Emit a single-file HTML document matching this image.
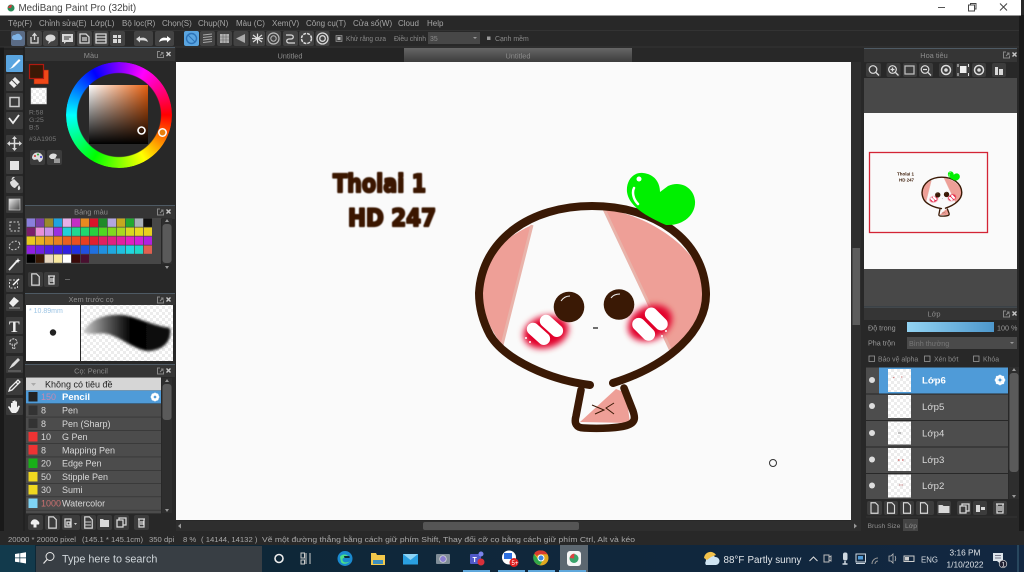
<!DOCTYPE html>
<html><head><meta charset="utf-8"><title>MediBang Paint Pro</title>
<style>
html,body{margin:0;padding:0;width:1024px;height:572px;overflow:hidden;background:#282828}
#wheel{position:absolute;left:66px;top:61.5px;width:106px;height:106px;border-radius:50%;background:conic-gradient(from 90deg,#f00,#ff0,#0f0,#0ff,#00f,#f0f,#f00);-webkit-mask:radial-gradient(circle,transparent 41.5px,#000 42.5px);mask:radial-gradient(circle,transparent 41.5px,#000 42.5px)}
#sq{position:absolute;left:89px;top:85px;width:59px;height:59px;background:linear-gradient(to bottom,transparent,#000),linear-gradient(to right,#fff,#e8600f)}
svg#ui{position:absolute;left:0;top:0}
text{font-family:"Liberation Sans","DejaVu Sans","Noto Sans CJK SC",sans-serif}
.m{font-size:8px;fill:#a6a6a6}.h{font-size:7.4px;fill:#8c8c8c;text-anchor:middle}.s{font-size:7.7px;fill:#a8a8a8}
.b{font-size:9px;fill:#d8d8d8}.l{font-size:9.6px;fill:#d8d8d8}.t{font-size:6.9px;fill:#8a8a8a}.g{fill:none;stroke:#d8d8d8;stroke-width:1.3}
.f{fill:#d8d8d8}.art{font-family:"DejaVu Sans","Liberation Sans",sans-serif;font-weight:bold;fill:#3a1905;stroke:#3a1905;stroke-linejoin:round}
</style></head><body>
<div id="wheel"></div><div id="sq"></div>
<svg id="ui" width="1024" height="572" viewBox="0 0 1024 572" xmlns="http://www.w3.org/2000/svg">
<defs>
<filter id="bl" x="-40%" y="-40%" width="180%" height="180%"><feGaussianBlur stdDeviation="3.2"/></filter>
<filter id="b1"><feGaussianBlur stdDeviation="1.2"/></filter>
<filter id="b0"><feGaussianBlur stdDeviation=".6"/></filter>
<linearGradient id="bar" x1="0" x2="1"><stop offset="0" stop-color="#92d3f2"/><stop offset="1" stop-color="#4d97cc"/></linearGradient>
<linearGradient id="tab" x1="0" x2="0" y1="0" y2="1"><stop offset="0" stop-color="#666"/><stop offset="1" stop-color="#3d3d3d"/></linearGradient>
<linearGradient id="gr" x1="0" x2="1" y1="0" y2="1"><stop offset="0" stop-color="#eee"/><stop offset="1" stop-color="#444"/></linearGradient>
<linearGradient id="st" x1="0" x2="1"><stop offset="0" stop-color="#ccc"/><stop offset=".25" stop-color="#666"/><stop offset=".55" stop-color="#000"/><stop offset="1" stop-color="#111"/></linearGradient>
<linearGradient id="tb" x1="0" x2="1"><stop offset="0" stop-color="#0d2735"/><stop offset="1" stop-color="#122741"/></linearGradient>
<pattern id="ck" width="6" height="6" patternUnits="userSpaceOnUse"><rect width="6" height="6" fill="#fff"/><rect width="3" height="3" fill="#ececec"/><rect x="3" y="3" width="3" height="3" fill="#ececec"/></pattern>
<symbol id="x" viewBox="0 0 14 8" overflow="visible"><path d="M3 1h-2.500v6h6v-2.500" fill="none" stroke="#888"/><path d="M3 5l3-3m-2 0h2v2" fill="none" stroke="#888"/><path d="M9.500 1.500l4 4m0-4l-4 4" stroke="#c8c8c8" stroke-width="1.400"/></symbol>
<symbol id="doc" viewBox="0 0 16 16"><path class="g" d="M4 2h5l3 3v9H4z"/></symbol>
<symbol id="gear" viewBox="0 0 16 16"><circle cx="8" cy="8" r="5" fill="none" stroke="#fff" stroke-width="3"/><path d="M8 1v14M1 8h14M3 3l10 10M13 3L3 13" stroke="#fff" stroke-width="2"/><circle cx="8" cy="8" r="2" fill="#4f9bd8"/></symbol>
<g id="art">
<path d="M532 225L502 345C480 315 478 290 484 270C490 250 510 235 532 225Z" fill="#ee9f97"/>
<path d="M604 209L672 353C695 335 706 310 704 285C700 250 650 215 604 209Z" fill="#ee9f97"/>
<path d="M616 389L580 422L630 423L626 393Z" fill="#ee9f97"/>
<path d="M532 225L502 345M604 209L672 353" stroke="#e9b3aa" stroke-width="3" fill="none"/>
<ellipse cx="546" cy="332" rx="23" ry="16" fill="#e2002a" filter="url(#bl)" transform="rotate(-15 546 332)"/>
<ellipse cx="650" cy="323" rx="23" ry="17" fill="#e2002a" filter="url(#bl)" transform="rotate(-25 650 323)"/>
<g fill="#fff"><rect x="525" y="328" width="27" height="12.5" rx="6.2" transform="rotate(42 539 334)"/><rect x="538" y="320" width="27" height="12.5" rx="6.2" transform="rotate(42 552 326)"/><rect x="630.500" y="323" width="27" height="13" rx="6.500" transform="rotate(45 644 329)"/><rect x="643" y="313" width="27" height="13" rx="6.500" transform="rotate(45 657 319)"/>
<circle cx="526" cy="338" r="1"/><circle cx="530" cy="342" r="1"/><circle cx="666" cy="331" r="1"/><circle cx="662" cy="336" r="1"/></g>
<path d="M590 385C550 380 505 360 490 335C482 320 479 305 479 293C482 240 530 206 592 206C655 206 704 240 706 293C707 330 670 365 613 383" fill="none" stroke="#3a1905" stroke-width="8" stroke-linecap="round"/>
<path d="M581 390L576 416C574 423 576 428 584 428C600 429 620 428 628 425C636 422 635 417 633 411L624 388" fill="none" stroke="#3a1905" stroke-width="7.500" stroke-linecap="round" stroke-linejoin="round"/>
<circle cx="569" cy="307" r="15.300" fill="#3a1905"/><circle cx="619" cy="304.500" r="15.300" fill="#3a1905"/>
<path d="M561 301C563 298 566 296 570 296M611 298C613 295 616 294 620 294" stroke="#eee" stroke-width="1" fill="none"/>
<path d="M593 328L598 328" stroke="#222" stroke-width="1.300"/>
<path d="M592 405L604 410L595 414M614 403L606 408L614 414" stroke="#3a1905" stroke-width="1" fill="none"/>
<path d="M643 173C632 172 626 182 627 192C629 207 648 217 666 225C684 226 696 214 695 201C694 188 681 180 668 186L660 192C660 182 654 174 643 173Z" fill="#00f000"/>
<path d="M634 188C632 192 633 199 638 204" stroke="#fff" stroke-width="2.500" fill="none" stroke-linecap="round"/><circle cx="639" cy="179" r="2.500" fill="#fff"/>
</g>
</defs>

<rect y="47" width="4" height="484" fill="#191919"/><rect x="1019" y="15" width="5" height="516" fill="#191919"/>
<!-- title -->
<rect width="1021" height="15.500" fill="#fff"/>
<circle cx="11" cy="8" r="3.500" fill="#2d8a5a"/><path d="M8 8a3.500 3.500 0 0 1 4-3l-1 3z" fill="#d63a3a"/>
<text x="18.500" y="11" font-size="9.800" fill="#444">MediBang Paint Pro (32bit)</text>
<path d="M938 7.500h7" stroke="#555"/><rect x="968.500" y="5" width="6" height="6" fill="none" stroke="#444"/><path d="M970.500 5V3.500h5.500V9h-1" fill="none" stroke="#444"/><path d="M1000 3.500l7 7m0-7l-7 7" stroke="#444"/>

<!-- menu -->
<g class="m"><text class="m" x="8" y="26">Tệp(F)</text><text class="m" x="39" y="26">Chỉnh sửa(E)</text><text class="m" x="90.500" y="26">Lớp(L)</text><text class="m" x="122" y="26">Bộ lọc(R)</text><text class="m" x="162" y="26">Chọn(S)</text><text class="m" x="198" y="26">Chụp(N)</text><text class="m" x="236" y="26">Màu (C)</text><text class="m" x="272" y="26">Xem(V)</text><text class="m" x="306" y="26">Công cụ(T)</text><text class="m" x="353" y="26">Cửa sổ(W)</text><text class="m" x="398" y="26">Cloud</text><text class="m" x="427" y="26">Help</text></g>
<path d="M0 30.500H1019" stroke="#333"/><path d="M0 47H1019" stroke="#333"/>

<!-- toolbar -->
<g fill="#434343"><rect x="11" y="31" width="14" height="15" rx="2" fill="#5a6b85"/><rect x="27" y="31" width="15" height="15" rx="2"/><rect x="43" y="31" width="15" height="15" rx="2"/><rect x="60" y="31" width="15" height="15" rx="2"/><rect x="77" y="31" width="15" height="15" rx="2"/><rect x="93.500" y="31" width="15" height="15" rx="2"/><rect x="110" y="31" width="15" height="15" rx="2"/><rect x="134" y="31" width="19" height="15" rx="2"/><rect x="155" y="31" width="19" height="15" rx="2"/><rect x="184" y="31" width="15" height="15" rx="2" fill="#5aa5e0"/><rect x="200" y="31" width="15" height="15" rx="2"/><rect x="217" y="31" width="15" height="15" rx="2"/><rect x="233.500" y="31" width="15" height="15" rx="2"/><rect x="250" y="31" width="15" height="15" rx="2"/><rect x="266" y="31" width="15" height="15" rx="2"/><rect x="283" y="31" width="15" height="15" rx="2"/><rect x="299" y="31" width="15" height="15" rx="2"/><rect x="315.500" y="31" width="14" height="15" rx="2"/></g>
<path d="M14 40a2.500 2.500 0 0 1 1-5a3.500 3.500 0 0 1 6 1a2.200 2.200 0 0 1 0 4z" fill="#7fb4e8"/>
<path class="g" d="M31 37v6h7v-6M34.500 40v-6M32.500 36l2-2.500 2 2.500"/>
<ellipse cx="50.500" cy="38" rx="5" ry="3.500" class="f"/><path class="f" d="M49 41l-1 3 3-2.500z"/>
<path class="f" d="M62 34h11v8h-7l-2 2v-2h-2z"/><path d="M64 37h7M64 39h5" stroke="#333"/>
<path class="g" d="M80 34h6l3 3v6h-9zM82 38h5M82 40h5"/>
<path class="g" d="M96 34h10v9H96zM96 37h10M96 40h10"/>
<path class="f" d="M113 35h4v3h-4zM118 35h3v3h-3zM113 39h4v4h-4zM118 39h3v4h-3z"/>
<path d="M148 42c-1-4-4-5-8-4v-2l-4 3 4 3.500v-2c3-.500 6 0 8 1.500z" class="f"/>
<path d="M159 42c1-4 4-5 8-4v-2l4 3-4 3.500v-2c-3-.500-6 0-8 1.500z" fill="#fff"/>
<circle cx="191.500" cy="38.500" r="5" fill="none" stroke="#2d73b8" stroke-width="1.400"/><path d="M188 35l7 7" stroke="#2d73b8"/>
<path d="M203 35l9-1M203 37.500l9-1M203 40l9-1M203 42.500l9-1" stroke="#aaa"/>
<rect x="220" y="34" width="9" height="9" fill="#b0b0b0"/><path d="M223 34v9M226 34v9M220 37h9M220 40h9" stroke="#666" stroke-width=".6"/>
<path d="M245 34l-9 4.500 9 4.500z" fill="#aaa"/>
<path d="M253 35l9 7m0-7l-9 7M257.500 33.500v10M252 38.500h11" stroke="#ddd" stroke-width="1.200"/>
<circle cx="273.500" cy="38.500" r="5.500" fill="none" stroke="#bbb" stroke-width="1.200"/><circle cx="273.500" cy="38.500" r="2.700" fill="none" stroke="#bbb"/>
<path class="g" d="M286 35h5c3 0 3 4 0 4h-2c-3 0-3 4 0 4h6"/>
<circle cx="306.500" cy="38.500" r="5" fill="none" stroke="#ddd" stroke-width="1.500" stroke-dasharray="3 1"/>
<circle cx="322.500" cy="38.500" r="5.500" class="g"/><circle cx="322.500" cy="38.500" r="2.800" class="g"/>
<rect x="336" y="35.500" width="6" height="6" fill="#444" stroke="#999" stroke-width=".7"/><rect x="337.500" y="37" width="3" height="3" fill="#bbb"/>
<text class="t" x="346" y="41" textLength="40" lengthAdjust="spacingAndGlyphs">Khử răng cưa</text><text class="t" x="394" y="41" textLength="32" lengthAdjust="spacingAndGlyphs">Điều chỉnh</text>
<rect x="428" y="32" width="52" height="12" fill="#474747"/><text class="t" x="430" y="41">35</text><path d="M473 37l2 2 2-2z" fill="#999"/>
<rect x="487" y="36.500" width="3.500" height="3.500" fill="#999"/><text class="t" x="495" y="41" fill="#666">Cạnh mềm</text>

<!-- tabs -->
<rect x="176" y="48" width="228" height="14" fill="#242424"/><rect x="404" y="48" width="228" height="14" fill="url(#tab)"/>
<text class="h" x="290" y="58.500" font-size="7">Untitled</text><text class="h" x="518" y="58.500" font-size="7">Untitled</text>

<!-- canvas -->
<rect x="176" y="62" width="675" height="458" fill="#fafafa"/>
<rect x="851" y="62" width="10" height="459" fill="#2e2e2e"/><rect x="852.500" y="248" width="7.500" height="77" fill="#5c5c5c"/>
<rect x="176" y="521" width="685" height="10" fill="#2e2e2e"/><rect x="423" y="522" width="156" height="8" rx="2" fill="#555"/>
<path d="M178 526l3-2.500v5zM857 526l-3-2.500v5z" fill="#999"/>
<use href="#art"/>
<g filter="url(#b0)"><text class="art" x="333" y="192" font-size="25" stroke-width="2.200" textLength="93" lengthAdjust="spacingAndGlyphs">Tholai 1</text>
<text class="art" x="348" y="226" font-size="24" stroke-width="2.200" textLength="88" lengthAdjust="spacingAndGlyphs">HD 247</text></g>
<circle cx="773" cy="463" r="3.500" fill="none" stroke="#333"/>

<!-- left tools -->
<path d="M4 49H24M24 47V531" stroke="#1c1c1c"/>
<g fill="#3b3b3b"><rect x="6" y="55" width="17" height="17" rx="1" fill="#5aa5e0"/><rect x="6" y="74" width="17" height="17" rx="1"/><rect x="6" y="93" width="17" height="17" rx="1"/><rect x="6" y="112" width="17" height="17" rx="1"/><rect x="6" y="135" width="17" height="17" rx="1"/><rect x="6" y="157" width="17" height="17" rx="1"/><rect x="6" y="176" width="17" height="17" rx="1"/><rect x="6" y="196" width="17" height="17" rx="1"/><rect x="6" y="218" width="17" height="17" rx="1"/><rect x="6" y="237" width="17" height="17" rx="1"/><rect x="6" y="256" width="17" height="17" rx="1"/><rect x="6" y="275" width="17" height="17" rx="1"/><rect x="6" y="294" width="17" height="17" rx="1"/><rect x="6" y="317" width="17" height="17" rx="1"/><rect x="6" y="336" width="17" height="17" rx="1"/><rect x="6" y="356" width="17" height="17" rx="1"/><rect x="6" y="378" width="17" height="17" rx="1"/><rect x="6" y="398" width="17" height="17" rx="1"/></g>
<path d="M9 69c2-1 3-2 4-4l6-6 1.500 1.500-6 6c-1 1-3 2-5.500 2.500z" fill="#fff"/>
<path d="M15 77l5 5-6 6-5-5z" fill="#eee"/><path d="M12 80l5 5" stroke="#444"/>
<rect x="10" y="97.500" width="9" height="9" fill="none" stroke="#ccc" stroke-width="1.500"/>
<path d="M9 118l4 5 6-8" fill="none" stroke="#eee" stroke-width="1.800"/>
<path d="M14.500 137v13M8 143.500h13" stroke="#ddd" stroke-width="1.500"/><path class="f" d="M14.500 136l-2.500 3h5zM14.500 151l-2.500-3h5zM7 143.500l3-2.500v5zM22 143.500l-3-2.500v5z"/>
<rect x="10" y="161" width="9" height="9" fill="#e4e4e4"/>
<path d="M10 182l4-3 5 5-4 4c-2 0-5-3-5-6z" fill="#ddd"/><path d="M19 186c1 1.500 1 3 0 3.500s-1-2 0-3.500zM12 180c0-2 1-3 2.500-2.500" stroke="#ddd" fill="#ddd"/>
<rect x="9" y="199" width="11" height="11" fill="url(#gr)" stroke="#ccc" stroke-width=".7"/>
<rect x="10" y="222" width="9" height="9" fill="none" stroke="#ccc" stroke-dasharray="2 1.500"/>
<ellipse cx="14.500" cy="245.500" rx="5.500" ry="4" fill="none" stroke="#ccc" stroke-dasharray="2 1.500" transform="rotate(-25 14.500 245.500)"/>
<path d="M9 270l8-9" stroke="#eee" stroke-width="1.800"/><path d="M18 258l.7 2 2 .7-2 .7-.7 2-.7-2-2-.7 2-.7z" fill="#fff"/>
<rect x="9.500" y="280" width="8" height="8" fill="none" stroke="#ccc" stroke-dasharray="2 1.500"/><path d="M13 285l6-6" stroke="#fff" stroke-width="1.500"/>
<path d="M14 297l5 4-6 6-4-4z" fill="#eee"/><path d="M9 308h11" stroke="#999"/>
<text x="9" y="332" font-size="16" font-weight="bold" fill="#eee" style="font-family:'Liberation Serif',serif">T</text>
<path d="M10 341a4 4 0 0 1 7 0v3h-3l1 4-2 1-1-5h-2z" fill="none" stroke="#ddd" stroke-dasharray="2 1"/>
<path d="M9 369l3-5 6-6 2 2-6 6z" fill="#ddd"/><path d="M8 371h13" stroke="#777"/>
<path d="M9 391l1-3 6-6 2 2-6 6zM16 382l2-2 2 2-2 2" fill="none" stroke="#eee" stroke-width="1.300"/>
<path d="M11 412l-3-5 1-1 2 2v-5h1.500v3-5h1.500v5-5.500h1.500v5.500-4.500h1.500v6l1.500-2 1.500.5-2 5-2 2h-4z" fill="#eee"/>

<!-- color panel -->
<rect x="25" y="47" width="150" height="14" fill="#353535"/><path d="M25 47.500h150" stroke="#4e5a64"/>
<text class="h" x="91" y="58">Màu</text><use href="#x" x="157" y="50.500" width="14" height="8"/>
<rect x="34" y="70" width="14.500" height="14" fill="#f04818" stroke="#8a2a10" stroke-width=".5"/>
<rect x="29.500" y="64.500" width="14" height="14" fill="#3a1905" stroke="#b01a10" stroke-width="1.200"/>
<rect x="31" y="88" width="15.500" height="16" fill="url(#ck)" stroke="#ccc" stroke-width=".5"/>
<g font-size="6.800" fill="#777"><text x="29" y="114.500">R:58</text><text x="29" y="122">G:25</text><text x="29" y="129.500">B:5</text><text x="29" y="141">#3A1905</text></g>
<rect x="30" y="150" width="15" height="15" rx="2" fill="#3c3c3c"/><rect x="47" y="150" width="15" height="15" rx="2" fill="#3c3c3c"/>
<path d="M32 158a5.500 5 0 1 1 8 4c-2 0-1-2-2.500-2.500s-3.500 2-5.500-1.500z" fill="#ddd"/><circle cx="35" cy="156" r="1" fill="#c33"/><circle cx="38" cy="154.500" r="1" fill="#3a3"/><circle cx="41" cy="157" r="1" fill="#33c"/>
<path d="M49 157a4.500 4 0 0 1 8-2l-2 4h-4z" fill="#ddd"/><rect x="54" y="158.500" width="6" height="4.500" fill="#999"/>
<circle cx="141.500" cy="130.500" r="3.500" fill="none" stroke="#fff" stroke-width="1.600"/><circle cx="162.500" cy="132.500" r="3.700" fill="#e8800f" stroke="#fff" stroke-width="1.500"/>

<!-- palette panel -->
<rect x="25" y="205" width="150" height="14" fill="#353535"/><path d="M25 205.500h150" stroke="#4e5a64"/>
<text class="h" x="91" y="214.500">Bảng màu</text><use href="#x" x="157" y="208" width="14" height="8"/>
<rect x="26" y="218" width="135" height="46" fill="#474747"/>
<g transform="translate(26.700 218.500)">
<rect x="0" y="0" width="8.300" height="8.300" fill="#8a7fdc"/><rect x="9" y="0" width="8.300" height="8.300" fill="#7b3fa8"/><rect x="18" y="0" width="8.300" height="8.300" fill="#9a8a2c"/><rect x="27" y="0" width="8.300" height="8.300" fill="#1fa3e0"/><rect x="36" y="0" width="8.300" height="8.300" fill="#e6b0e8"/><rect x="45" y="0" width="8.300" height="8.300" fill="#c42fc4"/><rect x="54" y="0" width="8.300" height="8.300" fill="#e88a20"/><rect x="63" y="0" width="8.300" height="8.300" fill="#d8152a"/><rect x="72" y="0" width="8.300" height="8.300" fill="#1f8a2a"/><rect x="81" y="0" width="8.300" height="8.300" fill="#b3a6e0"/><rect x="90" y="0" width="8.300" height="8.300" fill="#c4a820"/><rect x="99" y="0" width="8.300" height="8.300" fill="#22a830"/><rect x="108" y="0" width="8.300" height="8.300" fill="#a8b0b8"/><rect x="117" y="0" width="8.300" height="8.300" fill="#101010"/>
<rect x="0" y="9" width="8.300" height="8.300" fill="#7a1f6a"/><rect x="9" y="9" width="8.300" height="8.300" fill="#e890d8"/><rect x="18" y="9" width="8.300" height="8.300" fill="#c890e8"/><rect x="27" y="9" width="8.300" height="8.300" fill="#9a2fe0"/><rect x="36" y="9" width="8.300" height="8.300" fill="#20d0d8"/><rect x="45" y="9" width="8.300" height="8.300" fill="#20d890"/><rect x="54" y="9" width="8.300" height="8.300" fill="#20d870"/><rect x="63" y="9" width="8.300" height="8.300" fill="#28d040"/><rect x="72" y="9" width="8.300" height="8.300" fill="#50d820"/><rect x="81" y="9" width="8.300" height="8.300" fill="#80d820"/><rect x="90" y="9" width="8.300" height="8.300" fill="#a8d820"/><rect x="99" y="9" width="8.300" height="8.300" fill="#d8d820"/><rect x="108" y="9" width="8.300" height="8.300" fill="#e8d820"/><rect x="117" y="9" width="8.300" height="8.300" fill="#e8d020"/>
<rect x="0" y="18" width="8.300" height="8.300" fill="#e8c820"/><rect x="9" y="18" width="8.300" height="8.300" fill="#e8b020"/><rect x="18" y="18" width="8.300" height="8.300" fill="#e89820"/><rect x="27" y="18" width="8.300" height="8.300" fill="#e88020"/><rect x="36" y="18" width="8.300" height="8.300" fill="#e86020"/><rect x="45" y="18" width="8.300" height="8.300" fill="#e85020"/><rect x="54" y="18" width="8.300" height="8.300" fill="#e84020"/><rect x="63" y="18" width="8.300" height="8.300" fill="#e02030"/><rect x="72" y="18" width="8.300" height="8.300" fill="#e02060"/><rect x="81" y="18" width="8.300" height="8.300" fill="#e02080"/><rect x="90" y="18" width="8.300" height="8.300" fill="#e020a0"/><rect x="99" y="18" width="8.300" height="8.300" fill="#e020c0"/><rect x="108" y="18" width="8.300" height="8.300" fill="#d020d8"/><rect x="117" y="18" width="8.300" height="8.300" fill="#b020e0"/>
<rect x="0" y="27" width="8.300" height="8.300" fill="#9020e0"/><rect x="9" y="27" width="8.300" height="8.300" fill="#7020e0"/><rect x="18" y="27" width="8.300" height="8.300" fill="#5020e0"/><rect x="27" y="27" width="8.300" height="8.300" fill="#4020e0"/><rect x="36" y="27" width="8.300" height="8.300" fill="#3020e0"/><rect x="45" y="27" width="8.300" height="8.300" fill="#2030e0"/><rect x="54" y="27" width="8.300" height="8.300" fill="#2050e0"/><rect x="63" y="27" width="8.300" height="8.300" fill="#2070e0"/><rect x="72" y="27" width="8.300" height="8.300" fill="#2090e0"/><rect x="81" y="27" width="8.300" height="8.300" fill="#20a8e0"/><rect x="90" y="27" width="8.300" height="8.300" fill="#20c0e0"/><rect x="99" y="27" width="8.300" height="8.300" fill="#20d8e0"/><rect x="108" y="27" width="8.300" height="8.300" fill="#20d8c8"/><rect x="117" y="27" width="8.300" height="8.300" fill="#e06050"/>
<rect x="0" y="36" width="8.300" height="8.300" fill="#000"/><rect x="9" y="36" width="8.300" height="8.300" fill="#3a1905"/><rect x="18" y="36" width="8.300" height="8.300" fill="#e8d8c0"/><rect x="27" y="36" width="8.300" height="8.300" fill="#f8e8a0"/><rect x="36" y="36" width="8.300" height="8.300" fill="#fff"/><rect x="45" y="36" width="8.300" height="8.300" fill="#3a0a0a"/><rect x="54" y="36" width="8.300" height="8.300" fill="#4a1030"/>
</g>
<rect x="162" y="218" width="10" height="46" fill="#2e2e2e"/><rect x="162.500" y="224" width="9" height="39" rx="3" fill="#5a5a5a"/><path d="M167 219l-2 3h4zM167 269l-2-3h4z" fill="#999"/>
<rect x="28" y="272" width="15" height="15" rx="2" fill="#3c3c3c"/><rect x="44" y="272" width="15" height="15" rx="2" fill="#3c3c3c"/>
<use href="#doc" x="28" y="272" width="15" height="15"/><path class="g" d="M48 276h7M49 276v8h5v-8M51 278v4M53 278v4"/><path d="M65 279.500h5" stroke="#666"/>

<!-- preview -->
<rect x="25" y="293" width="150" height="12" fill="#353535"/><path d="M25 293.500h150" stroke="#4e5a64"/>
<text class="h" x="91" y="302">Xem trước cọ</text><use href="#x" x="157" y="296" width="14" height="8"/>
<rect x="26" y="305" width="54" height="56" fill="#fff"/><rect x="81" y="305" width="92" height="56" fill="url(#ck)"/>
<text x="29" y="313" font-size="7" fill="#9cc4e4">* 10.89mm</text><circle cx="53" cy="332.500" r="3.200" fill="#222"/>
<path d="M83 332C90 320 102 314 122 315C135 316 150 325 170 328C172 340 165 350 148 351C135 350 122 338 108 334C100 332 90 336 83 332Z" fill="url(#st)" filter="url(#b1)"/>

<!-- brush panel -->
<rect x="25" y="364" width="150" height="13" fill="#353535"/><path d="M25 364.500h150" stroke="#4e5a64"/>
<text class="h" x="91" y="373.500">Cọ: Pencil</text><use href="#x" x="157" y="367" width="14" height="8"/>
<rect x="26" y="377.500" width="135" height="12.800" fill="#d6d6d6"/><path d="M31 383h5l-2.500 3z" fill="#aaa"/><text x="45" y="387.500" font-size="9" fill="#222">Không có tiêu đề</text>
<rect x="26" y="390.500" width="135" height="13" fill="#4f9bd8"/>
<g fill="#4c4c4c"><rect x="26" y="404" width="135" height="12.800"/><rect x="26" y="417.300" width="135" height="12.800"/><rect x="26" y="430.600" width="135" height="12.800"/><rect x="26" y="443.900" width="135" height="12.800"/><rect x="26" y="457.200" width="135" height="12.800"/><rect x="26" y="470.500" width="135" height="12.800"/><rect x="26" y="483.800" width="135" height="12.800"/><rect x="26" y="497.100" width="135" height="12.800"/><rect x="26" y="510.400" width="135" height="3"/></g>
<rect x="28.500" y="392" width="9" height="9.500" fill="#222"/><rect x="28.500" y="405.500" width="9" height="9.500" fill="#333"/><rect x="28.500" y="418.500" width="9" height="9.500" fill="#333"/><rect x="28.500" y="432" width="9" height="9.500" fill="#ee3333"/><rect x="28.500" y="445" width="9" height="9.500" fill="#ee3333"/><rect x="28.500" y="458.500" width="9" height="9.500" fill="#19b019"/><rect x="28.500" y="472" width="9" height="9.500" fill="#f0d820"/><rect x="28.500" y="485" width="9" height="9.500" fill="#f0d820"/><rect x="28.500" y="498.500" width="9" height="9.500" fill="#7fd4f5"/>
<text x="41" y="400" font-size="9" fill="#c58ab0">150</text><text x="62" y="400" font-size="9.500" font-weight="bold" fill="#fff">Pencil</text><use href="#gear" x="150" y="392" width="10" height="10"/>
<text class="b" x="41" y="413.500">8</text><text class="b" x="62" y="413.500">Pen</text>
<text class="b" x="41" y="427">8</text><text class="b" x="62" y="427">Pen (Sharp)</text>
<text class="b" x="41" y="440">10</text><text class="b" x="62" y="440">G Pen</text>
<text class="b" x="41" y="453.500">8</text><text class="b" x="62" y="453.500">Mapping Pen</text>
<text class="b" x="41" y="466.500">20</text><text class="b" x="62" y="466.500">Edge Pen</text>
<text class="b" x="41" y="480">50</text><text class="b" x="62" y="480">Stipple Pen</text>
<text class="b" x="41" y="493">30</text><text class="b" x="62" y="493">Sumi</text>
<text x="41" y="506.500" font-size="9" fill="#cc7070">1000</text><text class="b" x="62" y="506.500">Watercolor</text>
<rect x="162" y="378" width="10" height="135" fill="#2e2e2e"/><rect x="162.500" y="384" width="9" height="36" rx="3" fill="#5a5a5a"/><path d="M167 379l-2 3h4zM167 512l-2-3h4z" fill="#999"/>
<g fill="#3c3c3c"><rect x="28" y="515" width="15" height="15" rx="2"/><rect x="45" y="515" width="15" height="15" rx="2"/><rect x="62" y="515" width="18" height="15" rx="2"/><rect x="81" y="515" width="15" height="15" rx="2"/><rect x="97" y="515" width="15" height="15" rx="2"/><rect x="114" y="515" width="15" height="15" rx="2"/><rect x="134" y="515" width="15" height="15" rx="2"/></g>
<path d="M31 522a4 4 0 0 1 7-1a2.500 2.500 0 0 1 1 3.500h-2.500v3h-3v-3h-2c-1-.500-1-2 -.5-2.500z" fill="#eee"/>
<use href="#doc" x="45" y="515" width="15" height="15"/><path class="g" d="M65 519h6v8h-6zM67 522h3v3h-3z"/><path d="M74 523l1.500 2 1.500-2z" fill="#ccc"/>
<use href="#doc" x="81" y="515" width="15" height="15"/><path d="M85 522h6M85 525h6" stroke="#ccc"/>
<path class="f" d="M100 519h3l1 1h5v7h-9z"/><path class="g" d="M117 520h6v7h-6zM119 520v-2h7v7h-3"/>
<path class="g" d="M138 519h7M139 519v8h5v-8M141 521v4M143 521v4"/>

<!-- navigator -->
<rect x="864" y="48" width="153" height="14" fill="#353535"/><path d="M864 48.500h153" stroke="#4e5a64"/>
<text class="h" x="934" y="58">Hoa tiêu</text><use href="#x" x="1003" y="51" width="14" height="8"/>
<g fill="#3c3c3c"><rect x="866" y="63" width="15" height="14" rx="2"/><rect x="886.500" y="63" width="14" height="14" rx="2"/><rect x="903" y="63" width="14" height="14" rx="2"/><rect x="919" y="63" width="14" height="14" rx="2"/><rect x="939" y="63" width="14" height="14" rx="2"/><rect x="956" y="63" width="14" height="14" rx="2"/><rect x="972" y="63" width="14" height="14" rx="2"/><rect x="992" y="63" width="14" height="14" rx="2"/></g>
<g class="g"><circle cx="873" cy="69.500" r="3.800" fill="none" stroke="#ddd" stroke-width="1.200"/><path d="M876 72.500l3 3" stroke="#ddd" stroke-width="1.400"/><circle cx="892.500" cy="69.500" r="3.800" fill="none" stroke="#ddd" stroke-width="1.200"/><path d="M895.500 72.500l3 3M890.500 69.500h4M892.500 67.500v4" stroke="#ddd"/><rect x="905" y="66" width="9" height="8" fill="none" stroke="#bbb"/><circle cx="925" cy="69.500" r="3.800" fill="none" stroke="#ddd" stroke-width="1.200"/><path d="M928 72.500l3 3M923 69.500h4" stroke="#ddd"/></g>
<circle cx="946" cy="70" r="4.500" fill="none" stroke="#ddd" stroke-width="1.500"/><circle cx="946" cy="70" r="1.800" fill="#ddd"/>
<rect x="960" y="66" width="6.500" height="7" fill="#eee"/><path d="M958 64v3M968.500 64v3M958 73v3M968.500 73v3" stroke="#ddd"/>
<circle cx="979" cy="70" r="4.500" fill="none" stroke="#ddd" stroke-width="1.500"/><circle cx="979" cy="70" r="1.800" fill="#ddd"/>
<path class="f" d="M995 67h3v8h-3zM999 69h4v6h-4z"/>
<rect x="864" y="78" width="153" height="35" fill="#484848"/><rect x="864" y="113" width="153" height="156" fill="#fafafa"/><rect x="864" y="269" width="153" height="37" fill="#484848"/>
<use href="#art" transform="translate(869 152) scale(.175) translate(-176 -62)"/>
<text x="897" y="175.500" font-size="4.800" font-weight="bold" fill="#3a1905" textLength="17" lengthAdjust="spacingAndGlyphs">Tholai 1</text>
<text x="899" y="181.500" font-size="4.500" font-weight="bold" fill="#3a1905" textLength="15" lengthAdjust="spacingAndGlyphs">HD 247</text>
<rect x="869.500" y="152.500" width="118" height="80" fill="none" stroke="#d32435" stroke-width="1.300"/>

<!-- layers -->
<rect x="864" y="307" width="153" height="13" fill="#353535"/><path d="M864 307h153" stroke="#4e5a64"/>
<text class="h" x="934" y="316.500">Lớp</text><use href="#x" x="1003" y="310" width="14" height="8"/>
<text x="868" y="330.500" font-size="7.200" fill="#9a9a9a">Độ trong</text><rect x="907" y="322" width="87" height="10" fill="url(#bar)"/><text x="997" y="330.500" font-size="7.200" fill="#9a9a9a">100 %</text>
<text x="868" y="345.500" font-size="7.200" fill="#9a9a9a">Pha trộn</text><rect x="907" y="337" width="110" height="12" fill="#4a4a4a"/><text x="909" y="346" font-size="7.200" fill="#777">Bình thường</text><path d="M1010 342l2 2 2-2z" fill="#999"/>
<rect x="869" y="356" width="5.500" height="5.500" fill="none" stroke="#999" stroke-width=".8"/><text class="t" x="878" y="361.500" fill="#888">Bảo vệ alpha</text>
<rect x="924.500" y="356" width="5.500" height="5.500" fill="none" stroke="#999" stroke-width=".8"/><text class="t" x="934" y="361.500">Xén bớt</text>
<rect x="973.500" y="356" width="5.500" height="5.500" fill="none" stroke="#999" stroke-width=".8"/><text class="t" x="983" y="361.500">Khóa</text>
<g fill="#4d4d4d"><rect x="866" y="367.500" width="142" height="26"/><rect x="866" y="394.500" width="142" height="25.500"/><rect x="866" y="421" width="142" height="25.500"/><rect x="866" y="447.500" width="142" height="25.500"/><rect x="866" y="474" width="142" height="25"/></g>
<rect x="879" y="367.500" width="129" height="26" fill="#4f9bd8"/>
<rect x="888" y="369" width="23" height="23" fill="url(#ck)"/><rect x="888" y="395" width="23" height="23" fill="url(#ck)"/><rect x="888" y="421.500" width="23" height="23" fill="url(#ck)"/><rect x="888" y="448" width="23" height="23" fill="url(#ck)"/><rect x="888" y="474.500" width="23" height="23" fill="url(#ck)"/>
<path d="M893 378l1.500-1M901 377l1.500 0" stroke="#c77"/><path d="M898 433h3" stroke="#888"/><path d="M898 460h1.500M902 460h1.500" stroke="#c33"/><path d="M899 484l1.500 1-1.500 1M903 484l-1.500 1 1.500 1" stroke="#c99" fill="none" stroke-width=".7"/>
<g fill="#ddd"><circle cx="872" cy="380" r="3"/><circle cx="872" cy="406" r="3"/><circle cx="872" cy="433" r="3"/><circle cx="872" cy="459.500" r="3"/><circle cx="872" cy="485.500" r="3"/></g>
<text x="922" y="383.500" font-size="9.600" font-weight="bold" fill="#fff">Lớp6</text><text class="l" x="922" y="410">Lớp5</text><text class="l" x="922" y="436.500">Lớp4</text><text class="l" x="922" y="463">Lớp3</text><text class="l" x="922" y="489">Lớp2</text>
<use href="#gear" x="994" y="374" width="12" height="12"/>
<rect x="1009" y="367" width="10" height="132" fill="#2e2e2e"/><rect x="1009.500" y="373" width="9" height="99" rx="3" fill="#5a5a5a"/><path d="M1014 368l-2 3h4zM1014 498l-2-3h4z" fill="#999"/>
<g fill="#3c3c3c"><rect x="867" y="501" width="15" height="14" rx="2"/><rect x="884" y="501" width="14" height="14" rx="2"/><rect x="900" y="501" width="14" height="14" rx="2"/><rect x="916" y="501" width="18" height="14" rx="2"/><rect x="937" y="501" width="14" height="14" rx="2"/><rect x="957" y="501" width="14" height="14" rx="2"/><rect x="973" y="501" width="14" height="14" rx="2"/><rect x="993" y="501" width="14" height="14" rx="2"/></g>
<use href="#doc" x="867" y="501" width="15" height="14"/><use href="#doc" x="884" y="501" width="14" height="14"/><use href="#doc" x="900" y="501" width="14" height="14"/><use href="#doc" x="917" y="501" width="14" height="14"/>
<path class="f" d="M938.500 505h4l1 1h6v7h-11z"/><path class="g" d="M960 506h6v7h-6zM962 506v-2h7v7h-3"/><path class="f" d="M976 505h4v7h-4zM981 507h4v3h-4z"/><path class="g" d="M996 504h8M997 504v9h6v-9M999 506v5M1001 506v5"/>
<path d="M866 517H1017" stroke="#333"/>
<text x="867.500" y="528" font-size="6.800" fill="#8e8e8e">Brush Size</text><rect x="903" y="519" width="15" height="12" fill="#444"/><text x="905" y="528" font-size="6.800" fill="#8e8e8e">Lớp</text>

<!-- status -->
<rect y="531" width="1024" height="14" fill="#282828"/>
<g class="s"><text class="s" x="8" y="542">20000 * 20000 pixel</text><text class="s" x="82" y="542">(145.1 * 145.1cm)</text><text class="s" x="149" y="542">350 dpi</text><text class="s" x="183" y="542">8 %</text><text class="s" x="201" y="542">( 14144, 14132 )</text><text class="s" x="262" y="542" textLength="373" lengthAdjust="spacingAndGlyphs">Vẽ một đường thẳng bằng cách giữ phím Shift, Thay đổi cỡ cọ bằng cách giữ phím Ctrl, Alt và kéo</text></g>

<!-- taskbar -->
<rect y="545" width="1024" height="27" fill="url(#tb)"/><rect y="545" width="35" height="27" fill="#123a4c"/>
<path d="M15 554l4.500-.7v4.200H15zM20.200 553.200l5.800-1v5.300h-5.800zM15 558.200h4.500v4.200L15 561.700zM20.200 558.200H26v5.300l-5.800-1z" fill="#fff"/>
<rect x="36" y="546" width="226" height="26" fill="#383e44"/>
<circle cx="50" cy="556.500" r="4" fill="none" stroke="#e8e8e8"/><path d="M47 559.500l-3.500 4" stroke="#e8e8e8" stroke-width="1.200"/>
<text x="62" y="562.500" font-size="10.800" fill="#d0d6da">Type here to search</text>
<circle cx="279" cy="558.500" r="4" fill="none" stroke="#eee" stroke-width="1.600"/>
<path d="M306 553v11M310 553v11" stroke="#ccc"/><rect x="301" y="553" width="3.500" height="5" fill="none" stroke="#ccc"/><rect x="301" y="560" width="3.500" height="4" fill="none" stroke="#ccc"/>
<circle cx="345" cy="558.500" r="7.500" fill="#1a8ad0"/><path d="M340 557c1-3 8-4 9 1h-5c-2 0-2 3 0 4 2 1 5 0 6-1-2 3-7 4-9 1z" fill="#4ce08a"/><path d="M344 556h5c.5 0 1 1 .5 2h-5z" fill="#0c2a3a"/>
<path d="M371 553h5l1 2h8v10h-14z" fill="#f2c84b"/><rect x="373" y="560" width="10" height="4" fill="#3d8fbf"/>
<rect x="403" y="554" width="15" height="10.500" fill="#2a9fe0"/><path d="M403 554l7.500 6 7.500-6z" fill="#8dd4f5"/>
<rect x="436" y="554" width="14" height="10" rx="1" fill="#7f8d98"/><circle cx="443" cy="559" r="3.300" fill="#8a7fd0" stroke="#ddd" stroke-width=".7"/>
<rect x="470" y="554" width="11" height="10" rx="1" fill="#5059c9"/><circle cx="481" cy="554" r="2.500" fill="#7b83eb"/><circle cx="481" cy="562" r="3.500" fill="#d8303a"/><text x="472.500" y="562" font-size="7" fill="#fff" font-weight="bold">T</text>
<circle cx="509" cy="557.500" r="7" fill="#fff"/><rect x="504" y="553" width="8" height="6" fill="#2c6fe0"/><circle cx="514" cy="562.500" r="4.500" fill="#e02020"/><text x="511.500" y="565" font-size="6" fill="#fff">5+</text>
<circle cx="541" cy="558" r="7.500" fill="#e0a820"/><path d="M541 550.500a7.500 7.500 0 0 1 6.500 3.700h-7a4 4 0 0 0-3.500 2l-2.800-3a7.500 7.500 0 0 1 6.800-2.700z" fill="#d83a30"/><path d="M534 554a7.500 7.500 0 0 0 6 11l3-5-4 .5z" fill="#2fa84a"/><circle cx="541" cy="558" r="3" fill="#3a86e0" stroke="#fff"/>
<rect x="560" y="545" width="28" height="27" fill="#5c6770"/><rect x="567" y="551" width="14" height="15" rx="3" fill="#f4f4f4"/><circle cx="574" cy="558.500" r="4.500" fill="#3aa36a"/><path d="M570 558a4.500 4.500 0 0 1 4.500-4.500l-.5 5z" fill="#e04040"/>
<g fill="#5fa8dc"><rect x="463" y="570" width="27" height="2"/><rect x="498" y="570" width="27" height="2"/><rect x="528" y="570" width="27" height="2"/><rect x="559" y="570" width="27" height="2"/></g>
<path d="M706 561a5 5 0 0 1 9-4 4 4 0 0 1 1 8h-10a3 3 0 0 1 0-4z" fill="#cfe4f2"/><path d="M704 558a6.500 6.500 0 0 1 12-3l-5 2-4 3z" fill="#f2c24b"/>
<text x="723.500" y="563" font-size="9.800" fill="#e2e6ea">88°F</text><text x="747.500" y="563" font-size="9.800" fill="#e2e6ea">Partly sunny</text>
<path d="M809.500 561l4-4 4 4" fill="none" stroke="#ddd"/><rect x="824" y="555" width="5" height="7" fill="none" stroke="#bbb"/><path d="M829 557l2-1v5l-2-1" stroke="#bbb" fill="none"/>
<rect x="843" y="552.500" width="4.500" height="8" rx="2" fill="#cfd8e0"/><path d="M845 561v3M842.500 564h5" stroke="#cfd8e0" stroke-width="1.500"/>
<rect x="856" y="554" width="9.500" height="8" fill="none" stroke="#cfd8e0"/><rect x="858" y="556" width="5" height="3.500" fill="#4f9bd8"/><path d="M856 563.500h9" stroke="#cfd8e0"/>
<path d="M872 564a6 6 0 0 1 6-6M875 564a3 3 0 0 1 3-3" fill="none" stroke="#999"/>
<path d="M889 556h2l2-2v9l-2-2h-2z" fill="none" stroke="#bbb" stroke-width=".8"/><path d="M895 556q1.500 2.500 0 5" fill="none" stroke="#bbb" stroke-width=".8"/>
<rect x="904" y="556" width="10" height="5.500" fill="none" stroke="#ccc"/><rect x="905" y="557" width="4" height="3.500" fill="#ccc"/>
<text x="921" y="562.500" font-size="7.800" fill="#d8dde2">ENG</text>
<text x="965" y="555.500" font-size="8.300" fill="#e0e4e8" text-anchor="middle">3:16 PM</text><text x="965" y="567.500" font-size="8.300" fill="#e0e4e8" text-anchor="middle">1/10/2022</text>
<path d="M993 553h10v8h-3v2.500L997 561h-4z" fill="#dce4ea"/><path d="M995 555.500h6M995 558h6" stroke="#778"/>
<circle cx="1003" cy="564" r="3.800" fill="#223" stroke="#ddd" stroke-width=".7"/><text x="1001.500" y="566.500" font-size="6.500" fill="#fff">1</text>
<rect x="1017" y="545" width="2" height="27" fill="#28475e"/>
</svg>
</body></html>
